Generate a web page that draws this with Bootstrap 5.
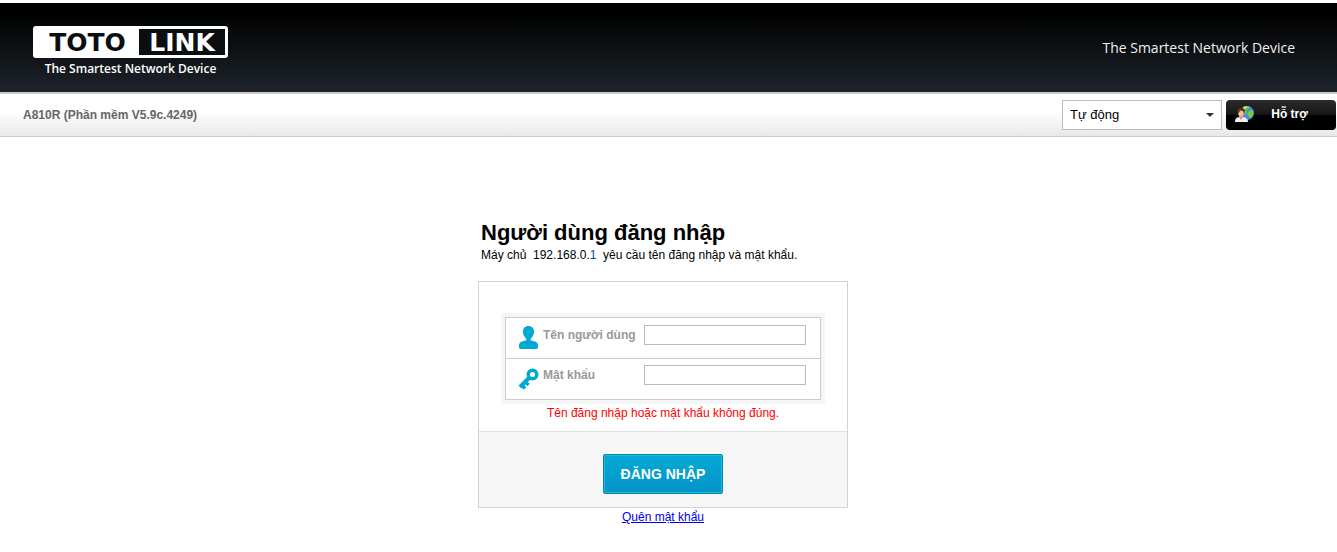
<!DOCTYPE html>
<html lang="vi">
<head>
<meta charset="utf-8">
<meta name="viewport" content="width=device-width, initial-scale=1">
<title>TOTOLINK</title>
<link href="https://cdn.jsdelivr.net/npm/bootstrap@5.3.0/dist/css/bootstrap.min.css" rel="stylesheet">
<style>
body { font: 12px/16px "Liberation Sans", Arial, sans-serif; color: #000; background: #fff; }
.site-head { margin-top: 3px; height: 91px; padding: 23px 42px 0 33px; background: linear-gradient(#000 10%, #1d242b); border-bottom: 2px solid #ccc; }
.brand { width: 195px; color: #fff; text-decoration: none; }
.plate { height: 32px; padding: 3px; border-radius: 3px; background: #fff; font: bold 25px/27px "DejaVu Sans", sans-serif; }
.plate-dark { width: 86px; background: #0b0f12; color: #fff; }
.plate-light { color: #0b0f12; }
.brand-tag { font: 600 12px/16px "Open Sans", sans-serif; margin-top: 3px; }
.slogan { font: 14px/20px "Open Sans", sans-serif; color: #f0f0f0; margin-top: 12px; }
.tool-bar { height: 43px; padding: 0 1px 0 23px; background: linear-gradient(#fff 40%, #e8e8e8); border-bottom: 1px solid #ccc; }
.model { color: #666; }
.lang { width: 160px; height: 30px; padding: 0 24px 0 7px; border: 1px solid #bbb; border-radius: 0; font-size: 13px; line-height: 20px; color: #000; background-color: #fff; background-size: 8px 4px; background-position: right 7px center; background-image: url("data:image/svg+xml,%3csvg xmlns='http://www.w3.org/2000/svg' viewBox='0 0 8 4'%3e%3cpath fill='%23333' d='M0 0h8L4 4z'/%3e%3c/svg%3e"); }
.help { width: 110px; height: 30px; padding: 0 13px 2px 8px; border: 0; border-radius: 4px; background: linear-gradient(#2b2b2b, #161616 50%, #000 51%); color: #fff; font-size: 12px; font-weight: bold; line-height: 16px; }
.help:hover { color: #fff; }
.login-wrap { width: 381px; max-width: 100%; padding-top: 82px; }
.intro { padding: 0 0 18px 3px; }
h1 { font-size: 22px; font-weight: bold; line-height: 28px; margin: 0; }
.login-box { max-width: 370px; border: 1px solid #d3d3d3; }
.fields { margin: 31px 22px 0; border: 4px solid #f5f5f5; }
.fields-in { border: 1px solid #ccc; }
.field { height: 40px; padding: 7px 14px 0 12px; }
.field + .field { height: 41px; border-top: 1px solid #ccc; padding-top: 6px; }
.field label { width: 101px; font-weight: bold; color: #999; line-height: 20px; margin-left: 4px; }
.field .form-control { height: 20px; min-width: 0; padding: 0 3px; border: 1px solid #bbb; border-radius: 0; font-size: 12px; }
.field svg { margin-top: 1px; }
.field + .field svg { margin-top: 3px; }
.error { color: #f00; margin: 1px 0 10px; }
.login-foot { height: 76px; padding-top: 8px; border-top: 1px solid #e0e0e0; background: #f6f6f6; }
.login-btn { width: 120px; height: 40px; padding: 0; border: 1px solid #0784ab; border-radius: 2px; background: linear-gradient(#04aad6, #0492c8); box-shadow: inset 0 0 0 1px #13bfe0; color: #fff; font-size: 14px; font-weight: bold; line-height: 20px; }
.login-btn:hover { color: #fff; }
.login-link { max-width: 370px; padding-top: 1px; }
.forgot { color: #00e; }
.host { color: #0b4a93; }
</style>
</head>
<body>
<header class="site-head d-flex justify-content-between">
  <a class="brand" href="#">
    <div class="plate d-flex"><span class="plate-light flex-fill text-center">TOTO</span><span class="plate-dark text-center">LINK</span></div>
    <div class="brand-tag text-center">The Smartest Network Device</div>
  </a>
  <div class="slogan">The Smartest Network Device</div>
</header>
<div class="tool-bar d-flex align-items-center">
  <div class="model fw-bold me-auto">A810R (Phần mềm V5.9c.4249)</div>
  <select class="lang form-select me-1" aria-label="Ngôn ngữ"><option>Tự động</option></select>
  <button type="button" class="help btn d-flex align-items-center">
    <svg width="22" height="18" viewBox="0 0 22 18" aria-hidden="true">
      <circle cx="13" cy="8" r="7" fill="#3d8fe0"/>
      <path d="M9 2c3-1.800 6-1 7 0l-2 2-2 1 1 2-2 2-3-2zM15 6l4-1c1 3 0 6-2 8l-2-1-2-3z" fill="#7cc93c"/>
      <path d="M8 4c1-2 4-3 5-2l-2 2z" fill="#d8ed9b"/>
      <path d="M1 17c0-4 2-5 6-5s7 1 7 5z" fill="#f1f1f1"/>
      <path d="M5 10h4v2l-2 3-2-3z" fill="#d99a68"/>
      <ellipse cx="7" cy="7.500" rx="3" ry="4" fill="#efbd91"/>
      <path d="M3.500 7c-1-5 7-6 7.500-1l-1 3-1-3-3-.5-1.500 3z" fill="#54361e"/>
    </svg>
    <span class="flex-fill text-center">Hỗ trợ</span>
  </button>
</div>
<main class="login-wrap mx-auto">
  <div class="intro">
    <h1>Người dùng đăng nhập</h1>
    <div>Máy chủ&nbsp; 192.168.0.<span class="host">1</span>&nbsp; yêu cầu tên đăng nhập và mật khẩu.</div>
  </div>
  <form class="login-box">
    <div class="fields"><div class="fields-in">
      <div class="field d-flex">
        <svg width="21" height="24" viewBox="0 0 21 24" class="flex-shrink-0" fill="#00a8d6" aria-hidden="true"><path d="M10.500 0C7 0 5 2.300 5 5.500c0 3 1.200 5.500 3.300 7.200v1.500L4 15.500C1.500 16.300 1 18 1 20.500 1 22.300 1.500 23 3 23h15c1.500 0 2-.7 2-2.500 0-2.500-.5-4.200-3-5l-4.300-1.300v-1.500C14.800 11 16 8.500 16 5.500 16 2.300 14 0 10.500 0z"/></svg>
        <label for="user" class="flex-shrink-0">Tên người dùng</label>
        <input id="user" type="text" class="form-control">
      </div>
      <div class="field d-flex">
        <svg width="21" height="22" viewBox="0 0 21 22" class="flex-shrink-0" fill="none" stroke="#00a8d6" aria-hidden="true"><circle cx="14.500" cy="6.500" r="4.300" stroke-width="3.400"/><path d="M11.500 9.500 2 19" stroke-width="4"/><path d="m3 16 4 4.500M6.500 13.500l4 3.500" stroke-width="3.400"/></svg>
        <label for="pass" class="flex-shrink-0">Mật khẩu</label>
        <input id="pass" type="password" class="form-control">
      </div>
    </div></div>
    <div class="error text-center">Tên đăng nhập hoặc mật khẩu không đúng.</div>
    <div class="login-foot d-flex align-items-center justify-content-center">
      <button type="submit" class="login-btn btn">ĐĂNG NHẬP</button>
    </div>
  </form>
  <div class="login-link text-center"><a class="forgot" href="#">Quên mật khẩu</a></div>
</main>
<script src="https://cdn.jsdelivr.net/npm/bootstrap@5.3.0/dist/js/bootstrap.bundle.min.js"></script>
</body>
</html>
